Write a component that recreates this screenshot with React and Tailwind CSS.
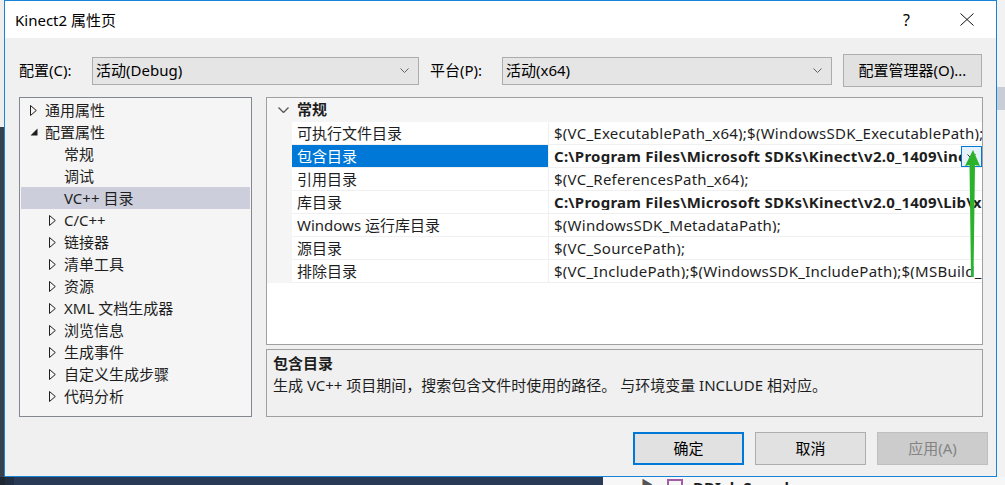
import React from 'react';

const font = "font-['Noto_Sans','Noto_Sans_CJK_SC',sans-serif]";

const tree = [
  { label: '通用属性', level: 0, arrow: 'closed' },
  { label: '配置属性', level: 0, arrow: 'open' },
  { label: '常规', level: 1 },
  { label: '调试', level: 1 },
  { label: 'VC++ 目录', level: 1, selected: true },
  { label: 'C/C++', level: 1, arrow: 'closed' },
  { label: '链接器', level: 1, arrow: 'closed' },
  { label: '清单工具', level: 1, arrow: 'closed' },
  { label: '资源', level: 1, arrow: 'closed' },
  { label: 'XML 文档生成器', level: 1, arrow: 'closed' },
  { label: '浏览信息', level: 1, arrow: 'closed' },
  { label: '生成事件', level: 1, arrow: 'closed' },
  { label: '自定义生成步骤', level: 1, arrow: 'closed' },
  { label: '代码分析', level: 1, arrow: 'closed' },
];

const props = [
  { name: '可执行文件目录', value: '$(VC_ExecutablePath_x64);$(WindowsSDK_ExecutablePath);$(VS_ExecutablePath);$(MSBuild_ExecutablePath);$(FxCopDir);$(PATH);' },
  { name: '包含目录', value: 'C:\\Program Files\\Microsoft SDKs\\Kinect\\v2.0_1409\\inc;$(IncludePath)', bold: true, selected: true },
  { name: '引用目录', value: '$(VC_ReferencesPath_x64);' },
  { name: '库目录', value: 'C:\\Program Files\\Microsoft SDKs\\Kinect\\v2.0_1409\\Lib\\x64;$(LibraryPath)', bold: true },
  { name: 'Windows 运行库目录', value: '$(WindowsSDK_MetadataPath);' },
  { name: '源目录', value: '$(VC_SourcePath);' },
  { name: '排除目录', value: '$(VC_IncludePath);$(WindowsSDK_IncludePath);$(MSBuild_ExecutablePath);$(VC_LibraryPath_x64);' },
];

const Chevron = ({ w = 9, h = 5, color = '#606060', sw = 1 }) => (
  <svg width={w} height={h} viewBox={`0 0 ${w} ${h}`} fill="none">
    <polyline points={`0.5,0.5 ${w / 2},${h - 0.5} ${w - 0.5},0.5`} stroke={color} strokeWidth={sw} />
  </svg>
);

const Arrow = ({ type }) => {
  if (type === 'closed')
    return (
      <svg width="7" height="11" viewBox="0 0 7 11" fill="none">
        <polygon points="0.5,0.5 6.3,5.5 0.5,10.5" stroke="#1e1e1e" strokeWidth="1" />
      </svg>
    );
  if (type === 'open')
    return (
      <svg width="8" height="8" viewBox="0 0 8 8">
        <polygon points="7.5,0.5 7.5,7.5 0.5,7.5" fill="#1e1e1e" />
      </svg>
    );
  return null;
};

const Combo = ({ text, width }) => (
  <div className={`${width} h-[28px] bg-[#e5e5e5] border border-[#acacac] flex items-center pl-[3px] pr-[9px]`}>
    <span className="flex-1 text-[15px] leading-none text-black">{text}</span>
    <Chevron w={9} h={5} color="#606060" />
  </div>
);

const Button = ({ children, variant }) => {
  const cls =
    variant === 'default'
      ? 'border-2 border-[#0078d7] bg-[#e1e1e1] text-black'
      : variant === 'disabled'
      ? 'border border-[#bfbfbf] bg-[#cccccc] text-[#838383]'
      : 'border border-[#adadad] bg-[#e1e1e1] text-black';
  return (
    <div className={`w-[111px] h-[33px] flex items-center justify-center text-[15px] leading-none ${cls}`}>
      {children}
    </div>
  );
};

export default function App() {
  return (
    <div className={`w-[1005px] h-[485px] overflow-hidden relative bg-[#f0f0f0] ${font}`}>
      <div className="flex h-[477px]">
        {/* desktop strip on the left */}
        <div className="w-[4px] flex flex-col">
          <div className="h-[127px] bg-[#eeeeee]" />
          <div className="flex-1 bg-[#34424f]" />
        </div>

        {/* dialog */}
        <div className="w-[993px] h-[477px] border border-[#1883d7] flex flex-col bg-[#f0f0f0]">
          {/* title bar */}
          <div className="h-[37px] bg-white flex items-center pl-[10px] shrink-0">
            <span className="text-[15px] leading-none text-black flex-1 pt-[1px]">Kinect2 属性页</span>
            <span className="text-[16px] leading-none text-black mr-[50px]">?</span>
            <svg width="14" height="13" viewBox="0 0 14 13" className="mr-[22px]">
              <line x1="0.5" y1="0.5" x2="13.5" y2="12.5" stroke="#111" strokeWidth="1" />
              <line x1="13.5" y1="0.5" x2="0.5" y2="12.5" stroke="#111" strokeWidth="1" />
            </svg>
          </div>

          {/* body */}
          <div className="flex-1 flex flex-col pt-[16px] pl-[14px]">
            <div className="flex items-center h-[33px]">
              <span className="w-[73px] text-[15px] leading-none text-black">配置(C):</span>
              <Combo text="活动(Debug)" width="w-[327px]" />
              <span className="w-[72px] ml-[11px] text-[15px] leading-none text-black">平台(P):</span>
              <Combo text="活动(x64)" width="w-[330px]" />
              <div className="ml-[11px] w-[139px] h-[33px] bg-[#e1e1e1] border border-[#adadad] flex items-center justify-center text-[15px] leading-none text-black">
                配置管理器(O)...
              </div>
            </div>

            <div className="flex mt-[10px]">
              {/* tree */}
              <div className="w-[233px] h-[320px] border border-[#828790] bg-[#f5f5f5] pt-[1px] px-[1px]">
                {tree.map((t) => (
                  <div
                    key={t.label}
                    className={`h-[22px] flex items-center ${t.level === 0 ? 'pl-[9px]' : 'pl-[28px]'} ${
                      t.selected ? 'bg-[#cccedb]' : ''
                    }`}
                  >
                    <span className="w-[15px] flex items-center">
                      <Arrow type={t.arrow} />
                    </span>
                    <span className="text-[15px] leading-none text-[#1e1e1e]">{t.label}</span>
                  </div>
                ))}
              </div>

              {/* right column */}
              <div className="ml-[14px] w-[717px] flex flex-col">
                <div className="h-[248px] border border-[#a0a0a0] bg-white flex flex-col">
                  <div className="h-[24px] bg-[#f5f5f5] flex items-center shrink-0">
                    <span className="w-[30px] flex justify-center pl-[2px]">
                      <Chevron w={11} h={6} color="#555" sw={1.3} />
                    </span>
                    <span className="text-[15px] leading-none font-bold text-[#1e1e1e] -mt-[1px]">常规</span>
                  </div>
                  {props.map((p) => (
                    <div key={p.name} className="flex h-[23px]">
                      <div className="w-[25px] bg-[#f5f5f5]" />
                      <div
                        className={`w-[257px] border-b border-r border-[#f0f0f0] flex items-center pl-[5px] text-[15px] leading-none whitespace-nowrap overflow-hidden ${
                          p.selected ? 'bg-[#0078d7] text-white' : 'text-[#1e1e1e]'
                        }`}
                      >
                        {p.name}
                      </div>
                      <div className="flex-1 min-w-0 border-b border-[#f0f0f0] flex items-center">
                        <span
                          className={`flex-1 min-w-0 pl-[5px] text-[15px] leading-none tracking-[0.25px] whitespace-nowrap overflow-hidden text-[#1e1e1e] ${
                            p.bold ? 'font-bold' : ''
                          }`}
                        >
                          {p.value}
                        </span>
                        {p.selected && (
                          <div className="w-[21px] h-[21px] border border-[#0078d7] bg-[#e5f1fb] flex items-center justify-center shrink-0">
                            <Chevron w={9} h={5} color="#333" />
                          </div>
                        )}
                      </div>
                    </div>
                  ))}
                </div>

                <div className="mt-[4px] h-[68px] border border-[#a0a0a0] bg-[#f0f0f0] pl-[6px] pt-[5px]">
                  <div className="h-[14px] flex items-center text-[15px] leading-none font-bold text-[#1e1e1e] mt-[1px]">包含目录</div>
                  <div className="mt-[8px] h-[14px] flex items-center text-[15px] leading-none text-[#1e1e1e]">
                    生成 VC++ 项目期间，搜索包含文件时使用的路径。 与环境变量 INCLUDE 相对应。
                  </div>
                </div>
              </div>
            </div>

            {/* buttons */}
            <div className="flex mt-[15px] pl-[614px] gap-[11px]">
              <Button variant="default">确定</Button>
              <Button>取消</Button>
              <Button variant="disabled">应用(A)</Button>
            </div>
          </div>
        </div>

        {/* strip on the right */}
        <div className="w-[8px] flex flex-col bg-[#f2f2f2]">
          <div className="h-[87px]" />
          <div className="h-[23px] bg-[#c9cdd5]" />
        </div>
      </div>

      {/* desktop strip at the bottom */}
      <div className="flex h-[8px] overflow-hidden">
        <div className="w-[5px] bg-[#1e2833]" />
        <div className="w-[9px] bg-[#222f42]" />
        <div className="w-[589px] bg-[#283a55]" />
        <div className="flex-1 bg-[#f7f7f7] flex items-start pl-[38px] overflow-hidden">
          <span className="text-[12px] leading-none text-[#555] mt-[2px]">▶</span>
          <span className="ml-[14px] mt-[2px] w-[16px] h-[14px] border-2 border-[#a15ca8] shrink-0" />
          <span className="ml-[10px] mt-[3px] text-[15px] leading-none font-bold text-[#1e1e1e]">DDIab Sample</span>
        </div>
      </div>

      {/* green arrow annotation */}
      <svg className="absolute left-[960px] top-[145px]" width="25" height="135" viewBox="0 0 25 135">
        <polygon points="13,5 20,21 15,20 13.5,132 11,132 9.5,20 5,21" fill="#2bb22b" />
      </svg>
    </div>
  );
}
